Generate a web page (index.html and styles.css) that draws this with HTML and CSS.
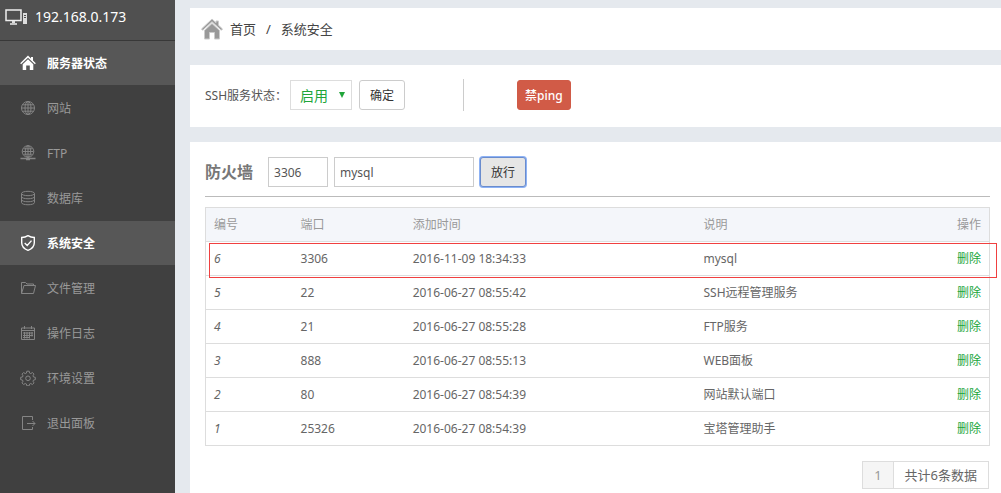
FILE: index.html
```html
<!DOCTYPE html>
<html lang="zh-CN">
<head>
<meta charset="utf-8">
<title>系统安全</title>
<link rel="stylesheet" href="styles.css">
</head>
<body>
<div class="app">
  <aside class="sidebar">
    <div class="host">
      <svg width="24" height="16" viewBox="0 0 24 16" fill="none" stroke="#eee"><path stroke-width="1.500" d="M1 1h15v10.500H1z"/><path stroke-width="1.500" d="M5 15h7"/><path stroke="none" fill="#ddd" d="M7 12h3v2H7zM18 4h4v11h-4z"/><path stroke="#505050" d="M19 6.500h2M19 8.500h2"/></svg>
      <span>192.168.0.173</span>
    </div>
    <nav class="menu">
      <a class="item active" href="#"><svg class="icon" viewBox="0 0 16 16"><path fill="currentColor" d="M8 0.500l3 3V2h2v3.500l2.800 2.800-.9.900L8 2.700 1.100 9.200l-.9-.9zM8 4.200l5.300 5v5.800H9.800v-4.500H6.200V15H2.700V9.200z"/></svg>服务器状态</a>
      <a class="item" href="#"><svg class="icon" viewBox="0 0 16 16"><circle cx="8" cy="8" r="6.500"/><ellipse cx="8" cy="8" rx="3" ry="6.500"/><path d="M8 1.500v13M1.500 8h13M2.500 4.800h11M2.500 11.200h11"/></svg>网站</a>
      <a class="item" href="#"><svg class="icon" viewBox="0 0 16 16"><circle cx="8" cy="6.500" r="5.800"/><ellipse cx="8" cy="6.500" rx="2.700" ry="5.800"/><path d="M8 1v13M2.500 6.500h11M3.500 3.800h9M3.500 9.200h9"/><path stroke-width="1.500" d="M.5 13.500h15M6 14.500h4"/></svg>FTP</a>
      <a class="item" href="#"><svg class="icon" viewBox="0 0 16 16"><ellipse cx="8" cy="3.500" rx="6.500" ry="2.200"/><path d="M1.500 3.500v9c0 3 13 3 13 0v-9M1.500 6.500c0 3 13 3 13 0M1.500 9.500c0 3 13 3 13 0"/></svg>数据库</a>
      <a class="item active" href="#"><svg class="icon shield" viewBox="0 0 16 16"><path d="M8 .7c2 1.300 4 1.800 6.300 1.800v5.200c0 3.600-2.600 6.200-6.300 7.600-3.700-1.400-6.300-4-6.300-7.600V2.500C4 2.500 6 2 8 .7zM4.700 8l2.500 2.400 4.300-4.800"/></svg>系统安全</a>
      <a class="item" href="#"><svg class="icon" viewBox="0 0 16 16"><path d="M1.500 13.500v-11h4l1.500 1.500h6.500v2M1.500 13.500l2.500-8h11.500l-2 8z"/></svg>文件管理</a>
      <a class="item" href="#"><svg class="icon" viewBox="0 0 16 16"><path d="M1.500 3h13v11.500h-13zM1.500 5.500h13M4.500 1v3M11.500 1v3"/><path stroke-width="1" d="M3 8h10M3 10.500h10M3 12.500h7M4.500 7v6.500M7 7v6.500M9.500 7v6.500M12 7v4.500"/></svg>操作日志</a>
      <a class="item" href="#"><svg class="icon" viewBox="0 0 16 16"><path d="M6.800 1.200h2.400l.4 1.900 1.200.5 1.600-1.100 1.600 1.600-1 1.700.5 1.200 1.800.3v2.400l-1.800.4-.5 1.100 1 1.700-1.600 1.600-1.600-1-1.200.5-.4 1.800H6.800l-.4-1.800-1.200-.5-1.600 1L2 12.900l1-1.700-.5-1.100-1.800-.4V7.300L2.500 7 3 5.800 2 4.100l1.600-1.600 1.600 1.100 1.200-.5z"/><circle cx="8" cy="8.300" r="2.300"/></svg>环境设置</a>
      <a class="item" href="#"><svg class="icon" viewBox="0 0 16 16"><path d="M12.500 5V1.500h-10v13h10V12M7 8.500h8M12.500 6l2.500 2.500-2.500 2.500"/></svg>退出面板</a>
    </nav>
  </aside>
  <main class="content">
    <nav class="panel crumbs">
      <svg width="22" height="22" viewBox="0 0 22 22" fill="#999"><path stroke="#ccc" d="M11 1l4 3.800V3h2.500v4.200l4 3.800-1.200 1.300L11 3.700l-9.300 8.600L.5 11zM11 5.500l7.500 7V21h-5v-6.500h-5V21h-5v-8.500z"/></svg>
      <a href="#">首页</a><span class="slash">/</span><a href="#">系统安全</a>
    </nav>
    <section class="panel controls">
      <label for="ssh">SSH服务状态：</label>
      <span class="picker"><select id="ssh"><option>启用</option><option>停用</option></select><svg class="arrow" width="6" height="6" viewBox="0 0 6 6"><path fill="#20a53a" d="M0 0h6L3 6z"/></svg></span>
      <button class="btn" type="button">确定</button>
      <span class="rule"></span>
      <button class="btn danger" type="button">禁ping</button>
    </section>
    <section class="panel firewall">
      <form class="bar">
        <h1>防火墙</h1>
        <input class="port" type="text" aria-label="端口" value="3306">
        <input class="note" type="text" aria-label="说明" value="mysql">
        <button class="btn focused" type="button">放行</button>
      </form>
      <div class="listing">
        <table>
          <colgroup><col class="c-id"><col class="c-port"><col class="c-time"><col class="c-note"><col class="c-act"></colgroup>
          <thead><tr><th>编号</th><th>端口</th><th>添加时间</th><th>说明</th><th>操作</th></tr></thead>
          <tbody>
            <tr><td><em>6</em></td><td>3306</td><td>2016-11-09 18:34:33</td><td>mysql</td><td><a href="#">删除</a></td></tr>
            <tr><td><em>5</em></td><td>22</td><td>2016-06-27 08:55:42</td><td>SSH远程管理服务</td><td><a href="#">删除</a></td></tr>
            <tr><td><em>4</em></td><td>21</td><td>2016-06-27 08:55:28</td><td>FTP服务</td><td><a href="#">删除</a></td></tr>
            <tr><td><em>3</em></td><td>888</td><td>2016-06-27 08:55:13</td><td>WEB面板</td><td><a href="#">删除</a></td></tr>
            <tr><td><em>2</em></td><td>80</td><td>2016-06-27 08:54:39</td><td>网站默认端口</td><td><a href="#">删除</a></td></tr>
            <tr><td><em>1</em></td><td>25326</td><td>2016-06-27 08:54:39</td><td>宝塔管理助手</td><td><a href="#">删除</a></td></tr>
          </tbody>
        </table>
        <div class="highlight"></div>
      </div>
      <div class="pager"><span class="current">1</span><span class="total">共计6条数据</span></div>
    </section>
  </main>
</div>
</body>
</html>
```
FILE: styles.css
```css
* { box-sizing: border-box; }
body {
  margin: 0;
  background: #e5e9ee;
  color: #555;
  font: 12px/18px "Noto Sans", "Noto Sans CJK SC", sans-serif;
}
a { color: inherit; text-decoration: none; }
button, input, select { font: inherit; }
.app { display: flex; min-height: 100vh; overflow: hidden; }
.sidebar { flex: 0 0 175px; background: #404040; }
.host {
  display: flex;
  align-items: center;
  gap: 6px;
  height: 41px;
  padding: 0 5px 7px;
  background: #505050;
  border-bottom: 1px solid #383838;
  color: #fff;
  font-size: 14px;
}
.menu { display: flex; flex-direction: column; gap: 1px; }
.item {
  display: flex;
  align-items: center;
  gap: 11px;
  height: 44px;
  padding: 2px 0 0 20px;
  color: #999;
}
.item.active { background: #575757; color: #fff; font-weight: 700; }
.icon { width: 16px; height: 16px; margin-bottom: 2px; fill: none; stroke: #858585; stroke-width: 1; }
.active .icon { stroke: none; }
.active .shield { stroke: #fff; stroke-width: 1.4; }
.content {
  flex: 1;
  min-width: 0;
  display: flex;
  flex-direction: column;
  gap: 15px;
  padding: 8px 0 0 15px;
}
.panel { background: #fff; }
.crumbs {
  display: flex;
  align-items: center;
  height: 42px;
  padding-left: 11px;
  color: #444;
  font-size: 13px;
}
.crumbs svg { margin-right: 7px; }
.slash { margin: 0 10px; }
.controls {
  display: flex;
  align-items: center;
  height: 62px;
  padding: 0 0 2px 15px;
}
.controls label { width: 85px; padding-top: 2px; white-space: nowrap; }
.picker { position: relative; margin-right: 7px; }
.picker select {
  display: block;
  appearance: none;
  width: 62px;
  height: 30px;
  padding: 2px 9px 0;
  border: 1px solid #ddd;
  border-radius: 0;
  background: #fff;
  color: #20a53a;
  font-size: 14px;
}
.arrow { position: absolute; right: 7px; top: 12px; pointer-events: none; }
.btn {
  height: 30px;
  padding: 1px 10px 0;
  border: 1px solid #ccc;
  border-radius: 3px;
  background: #fff;
  color: #333;
}
.rule { width: 1px; height: 32px; margin: 0 53px 0 58px; background: #ccc; }
.btn.danger {
  padding: 2px 7px 0;
  border-color: #d05b47;
  background: #d15b47;
  color: #fff;
  font-weight: 500;
}
.firewall { flex: 1; padding: 15px 11px 4px 15px; }
.bar {
  display: flex;
  align-items: center;
  gap: 6px;
  padding-bottom: 9px;
  border-bottom: 1px solid #bbb;
}
.bar h1 { margin: 0 9px 0 0; color: #777; font-size: 16px; line-height: 24px; }
.bar input {
  height: 30px;
  padding: 0 5px;
  border: 1px solid #ccc;
  color: #555;
}
.bar .port { width: 60px; }
.bar .note { width: 140px; }
.btn.focused {
  padding-top: 2px;
  border-color: #6a8ccd;
  background: #e6e6e6;
  box-shadow: 0 0 0 1px #8db2f5;
}
.listing { position: relative; margin-top: 10px; }
table {
  width: 100%;
  border: 1px solid #ddd;
  border-collapse: collapse;
  table-layout: fixed;
}
.c-id { width: 11.1%; }
.c-port { width: 14.3%; }
.c-time { width: 37.1%; }
.c-act { width: 12%; }
th, td {
  height: 34px;
  padding: 0 8px;
  border-bottom: 1px solid #ddd;
  text-align: left;
}
th { background: #f4f6fa; color: #999; font-weight: 400; }
td { color: #666; }
th:last-child, td:last-child { text-align: right; }
td a { color: #20a53a; }
.highlight {
  position: absolute;
  top: 36px;
  left: 4px;
  right: -7px;
  height: 35px;
  border: 1px solid #f04040;
  pointer-events: none;
}
.pager {
  display: flex;
  width: max-content;
  margin: 15px 1px 0 auto;
  border: 1px solid #ddd;
  color: #666;
  font-size: 13px;
  line-height: 26px;
}
.pager span { padding: 0 11px; }
.pager .current { border-right: 1px solid #ddd; background: #f5f5f5; color: #999; }
```
